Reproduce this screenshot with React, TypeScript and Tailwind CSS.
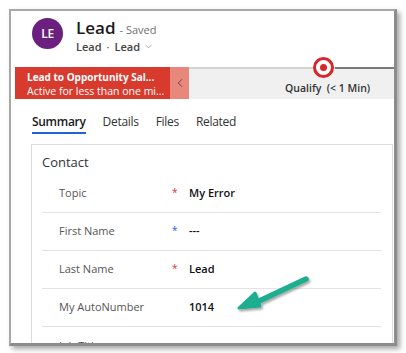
import { ChevronLeft, ChevronDown } from "lucide-react";

const rows = [
  { label: "Topic", mark: "red", value: "My Error" },
  { label: "First Name", mark: "blue", value: "---" },
  { label: "Last Name", mark: "red", value: "Lead" },
  { label: "My AutoNumber", mark: "", value: "1014" },
  { label: "Job Title", mark: "", value: "" },
];

const App = () => {
  return (
    <div
      className="w-[406px] h-[353px] bg-white overflow-hidden pt-[9px] pl-[9px]"
      style={{ fontFamily: '"Open Sans", "Noto Sans", sans-serif' }}
    >
      <div className="relative w-[388px] h-[337px] bg-white border-l-2 border-t-2 border-[#a8a8a8] border-r-[3px] border-b-[3px] border-r-[#8c8c8c] border-b-[#8c8c8c] shadow-[3px_3px_5px_rgba(0,0,0,0.35)] overflow-hidden">
        {/* header */}
        <div className="flex items-start h-[56px] pl-[21px] pt-[7px]">
          <div className="w-[31px] h-[31px] rounded-full bg-[#6b1f7f] flex items-center justify-center text-white text-[12px] font-semibold tracking-tight">
            LE
          </div>
          <div className="ml-[13px] -mt-[3px]">
            <div className="flex items-baseline gap-[4px]">
              <span className="text-[17px] font-semibold text-[#1a1a1a]">Lead</span>
              <span className="text-[11px] text-[#707070]">- Saved</span>
            </div>
            <div className="flex items-center text-[11px] text-[#444] -mt-[2px]">
              <span className="font-semibold">Lead</span>
              <span className="mx-[5px]">·</span>
              <span className="font-semibold">Lead</span>
              <ChevronDown size={11} strokeWidth={1.2} className="ml-[3px] text-[#777]" />
            </div>
          </div>
        </div>

        {/* process bar */}
        <div className="flex h-[32px] ml-[4px]">
          <div className="w-[155px] bg-[#d83b2e] text-white pl-[12px] pt-[3px] leading-[14px]">
            <div className="text-[10px] font-bold whitespace-nowrap">Lead to Opportunity Sal...</div>
            <div className="text-[10.5px] whitespace-nowrap">Active for less than one mi...</div>
          </div>
          <div className="w-[19px] bg-[#e8877c] flex items-center justify-center">
            <ChevronLeft size={14} strokeWidth={1.3} className="text-[#333]" />
          </div>
          <div className="relative flex-1 bg-[#f0f0f0] border-t-2 border-[#d4d4d4]">
            <div className="absolute -top-[2px] left-[146px] right-0 h-[2px] bg-[#7a7a7a]" />
            <div className="absolute -top-[12px] left-[124px] w-[21px] h-[21px] rounded-full bg-white border-[3px] border-[#d8262a] flex items-center justify-center">
              <div className="w-[7px] h-[7px] rounded-full bg-[#d8262a]" />
            </div>
            <div className="absolute top-[12px] left-[96px] text-[10.5px] font-semibold text-[#333] whitespace-nowrap">
              Qualify&nbsp; (&lt; 1 Min)
            </div>
          </div>
        </div>

        {/* tabs */}
        <div className="flex items-end gap-[17px] pl-[21px] h-[35px] text-[12px] tracking-[-0.3px] text-[#333]">
          <div className="font-semibold text-[#1a1a1a] border-b-2 border-[#1f63d6] pb-[1px]">Summary</div>
          <div className="pb-[3px]">Details</div>
          <div className="pb-[3px]">Files</div>
          <div className="pb-[3px]">Related</div>
        </div>

        {/* card */}
        <div className="ml-[20px] mr-[1px] mt-[10px] border border-[#dcdcdc] h-[220px] px-[10px]">
          <div className="pt-[8px] text-[13px] text-[#333] h-[30px]">Contact</div>
          {rows.map((r, i) => (
            <div
              key={r.label}
              className={`flex items-center h-[38px] ${i < rows.length - 1 ? "border-b border-[#e3e3e3]" : ""} mr-[1px]`}
            >
              <div className="w-[130px] pl-[17px] text-[11px] text-[#555] whitespace-nowrap">{r.label}</div>
              <div className="w-[17px] text-[10px] -mt-[3px]">
                {r.mark === "red" && <span className="text-[#d13438]">*</span>}
                {r.mark === "blue" && <span className="text-[#2266e3]">*</span>}
              </div>
              <div className="text-[11px] font-semibold text-[#111]">{r.value}</div>
            </div>
          ))}
        </div>

        {/* arrow annotation */}
        <svg
          className="absolute left-[222px] top-[262px]"
          width="80"
          height="40"
          viewBox="0 0 80 40"
        >
          <defs>
            <filter id="sh" x="-20%" y="-20%" width="150%" height="160%">
              <feDropShadow dx="1.5" dy="2" stdDeviation="1.2" floodColor="#000" floodOpacity="0.35" />
            </filter>
          </defs>
          <g filter="url(#sh)">
            <line x1="73" y1="6" x2="22" y2="30" stroke="#1fae8f" strokeWidth="5.5" strokeLinecap="round" />
            <polygon points="6,35 22,20 27,33" fill="#1fae8f" stroke="#1fae8f" strokeWidth="3" strokeLinejoin="round" />
          </g>
        </svg>
      </div>
    </div>
  );
};

export default App;
